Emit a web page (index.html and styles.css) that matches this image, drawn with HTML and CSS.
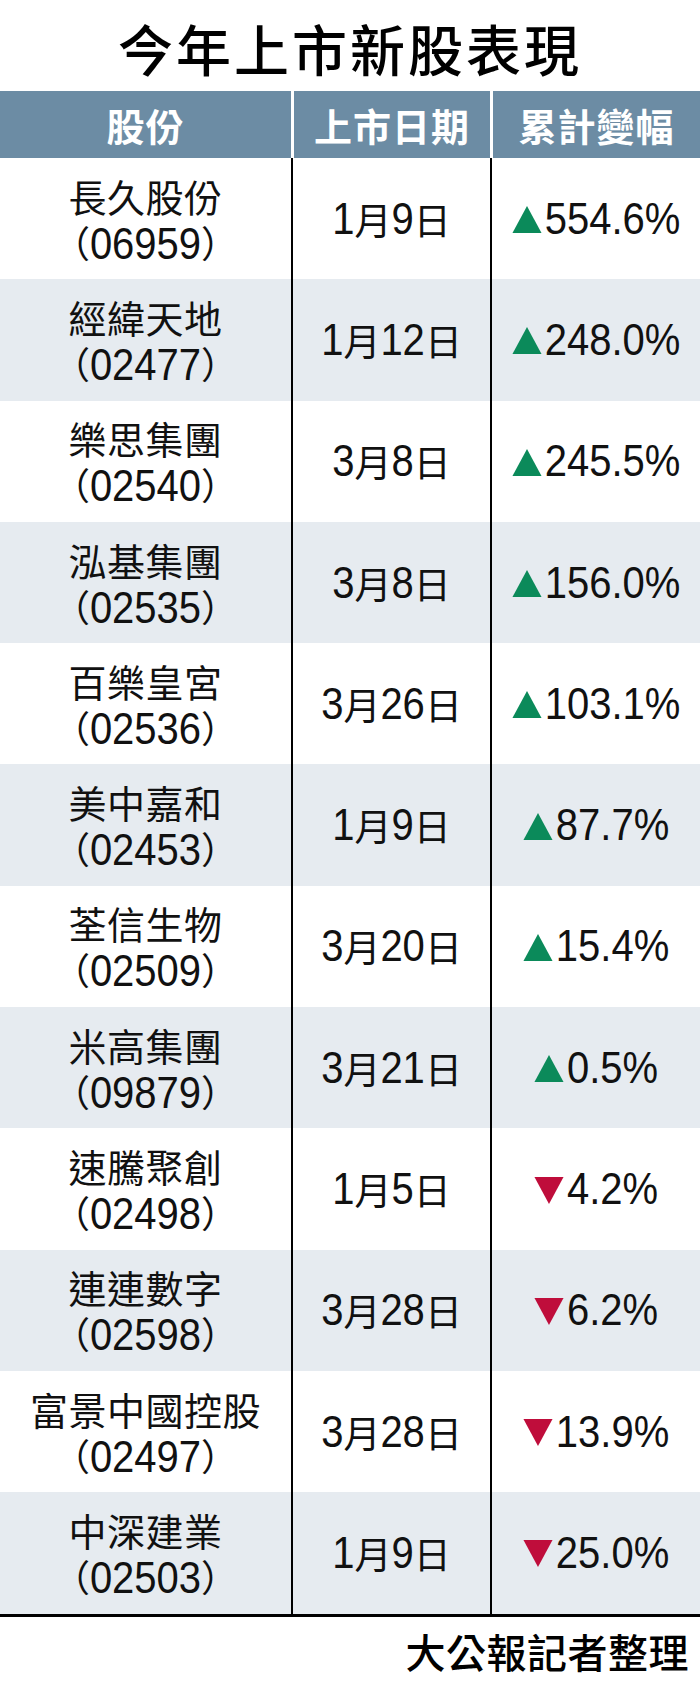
FILE: index.html
```html
<!DOCTYPE html>
<html lang="zh-Hant">
<head>
<meta charset="utf-8">
<title>今年上市新股表現</title>
<link rel="stylesheet" href="styles.css">
</head>
<body>
<div class="page">
  <h1 class="title">今年上市新股表現</h1>
  <div class="table">
    <div class="thead">
      <div class="th">股份</div>
      <div class="th">上市日期</div>
      <div class="th">累計變幅</div>
    </div>
    <div class="row">
      <div class="cell name"><span class="cn">長久股份</span><span class="code">（<span class="num">06959</span>）</span></div>
      <div class="cell date"><span class="num">1</span>月<span class="num">9</span>日</div>
      <div class="cell chg"><svg class="tri up" viewBox="0 0 28 26"><polygon points="14,0 28,26 0,26"/></svg><span class="num">554.6%</span></div>
    </div>
    <div class="row alt">
      <div class="cell name"><span class="cn">經緯天地</span><span class="code">（<span class="num">02477</span>）</span></div>
      <div class="cell date"><span class="num">1</span>月<span class="num">12</span>日</div>
      <div class="cell chg"><svg class="tri up" viewBox="0 0 28 26"><polygon points="14,0 28,26 0,26"/></svg><span class="num">248.0%</span></div>
    </div>
    <div class="row">
      <div class="cell name"><span class="cn">樂思集團</span><span class="code">（<span class="num">02540</span>）</span></div>
      <div class="cell date"><span class="num">3</span>月<span class="num">8</span>日</div>
      <div class="cell chg"><svg class="tri up" viewBox="0 0 28 26"><polygon points="14,0 28,26 0,26"/></svg><span class="num">245.5%</span></div>
    </div>
    <div class="row alt">
      <div class="cell name"><span class="cn">泓基集團</span><span class="code">（<span class="num">02535</span>）</span></div>
      <div class="cell date"><span class="num">3</span>月<span class="num">8</span>日</div>
      <div class="cell chg"><svg class="tri up" viewBox="0 0 28 26"><polygon points="14,0 28,26 0,26"/></svg><span class="num">156.0%</span></div>
    </div>
    <div class="row">
      <div class="cell name"><span class="cn">百樂皇宮</span><span class="code">（<span class="num">02536</span>）</span></div>
      <div class="cell date"><span class="num">3</span>月<span class="num">26</span>日</div>
      <div class="cell chg"><svg class="tri up" viewBox="0 0 28 26"><polygon points="14,0 28,26 0,26"/></svg><span class="num">103.1%</span></div>
    </div>
    <div class="row alt">
      <div class="cell name"><span class="cn">美中嘉和</span><span class="code">（<span class="num">02453</span>）</span></div>
      <div class="cell date"><span class="num">1</span>月<span class="num">9</span>日</div>
      <div class="cell chg"><svg class="tri up" viewBox="0 0 28 26"><polygon points="14,0 28,26 0,26"/></svg><span class="num">87.7%</span></div>
    </div>
    <div class="row">
      <div class="cell name"><span class="cn">荃信生物</span><span class="code">（<span class="num">02509</span>）</span></div>
      <div class="cell date"><span class="num">3</span>月<span class="num">20</span>日</div>
      <div class="cell chg"><svg class="tri up" viewBox="0 0 28 26"><polygon points="14,0 28,26 0,26"/></svg><span class="num">15.4%</span></div>
    </div>
    <div class="row alt">
      <div class="cell name"><span class="cn">米高集團</span><span class="code">（<span class="num">09879</span>）</span></div>
      <div class="cell date"><span class="num">3</span>月<span class="num">21</span>日</div>
      <div class="cell chg"><svg class="tri up" viewBox="0 0 28 26"><polygon points="14,0 28,26 0,26"/></svg><span class="num">0.5%</span></div>
    </div>
    <div class="row">
      <div class="cell name"><span class="cn">速騰聚創</span><span class="code">（<span class="num">02498</span>）</span></div>
      <div class="cell date"><span class="num">1</span>月<span class="num">5</span>日</div>
      <div class="cell chg"><svg class="tri down" viewBox="0 0 28 26"><polygon points="0,0 28,0 14,26"/></svg><span class="num">4.2%</span></div>
    </div>
    <div class="row alt">
      <div class="cell name"><span class="cn">連連數字</span><span class="code">（<span class="num">02598</span>）</span></div>
      <div class="cell date"><span class="num">3</span>月<span class="num">28</span>日</div>
      <div class="cell chg"><svg class="tri down" viewBox="0 0 28 26"><polygon points="0,0 28,0 14,26"/></svg><span class="num">6.2%</span></div>
    </div>
    <div class="row">
      <div class="cell name"><span class="cn">富景中國控股</span><span class="code">（<span class="num">02497</span>）</span></div>
      <div class="cell date"><span class="num">3</span>月<span class="num">28</span>日</div>
      <div class="cell chg"><svg class="tri down" viewBox="0 0 28 26"><polygon points="0,0 28,0 14,26"/></svg><span class="num">13.9%</span></div>
    </div>
    <div class="row alt">
      <div class="cell name"><span class="cn">中深建業</span><span class="code">（<span class="num">02503</span>）</span></div>
      <div class="cell date"><span class="num">1</span>月<span class="num">9</span>日</div>
      <div class="cell chg"><svg class="tri down" viewBox="0 0 28 26"><polygon points="0,0 28,0 14,26"/></svg><span class="num">25.0%</span></div>
    </div>
  </div>
  <div class="source">大公報記者整理</div>
</div>
</body>
</html>
```
FILE: styles.css
```css
html, body {
  margin: 0;
  padding: 0;
  background: #ffffff;
}

body {
  width: 700px;
  font-family: "Noto Sans CJK TC", sans-serif;
  color: #111111;
}

.page {
  display: flex;
  flex-direction: column;
}

.title {
  margin: 0;
  height: 91px;
  display: flex;
  align-items: center;
  justify-content: center;
  font-family: "Noto Sans CJK TC", sans-serif;
  font-weight: 500;
  font-size: 55px;
  letter-spacing: 3px;
  color: #000000;
  padding-top: 2px;
  box-sizing: border-box;
}

.table {
  display: flex;
  flex-direction: column;
  border-bottom: 3px solid #000000;
}

.thead {
  display: grid;
  grid-template-columns: 291px 199px 1fr;
  height: 67px;
}

.th {
  background: #6c8ca4;
  color: #ffffff;
  font-family: "Noto Sans CJK TC", sans-serif;
  font-weight: 700;
  font-size: 38px;
  display: flex;
  align-items: center;
  justify-content: center;
  letter-spacing: 1px;
}

.th + .th {
  border-left: 3px solid #ffffff;
}

.row {
  display: grid;
  grid-template-columns: 291px 199px 1fr;
  height: 121.3px;
  background: #ffffff;
}

.row.alt {
  background: #e6ebf0;
}

.cell {
  display: flex;
  align-items: center;
  justify-content: center;
  font-size: 37px;
  white-space: nowrap;
}

.cell + .cell {
  border-left: 2px solid #000000;
}

.name {
  flex-direction: column;
}

.cn {
  display: block;
  height: 47px;
  line-height: 47px;
  font-size: 38px;
  letter-spacing: 0.5px;
}

.code {
  display: block;
  height: 47px;
  line-height: 47px;
}

.num {
  display: inline-block;
  font-family: "Liberation Sans", sans-serif;
  font-size: 40px;
  line-height: 1;
  transform: scaleY(1.1);
}

.chg {
  gap: 3px;
}

.tri {
  width: 30px;
  height: 27px;
  flex: none;
  margin-top: 2px;
}

.tri.up {
  fill: #0b8a5a;
}

.tri.down {
  fill: #bf0d3b;
}

.source {
  height: 69px;
  display: flex;
  align-items: center;
  justify-content: flex-end;
  padding-right: 11px;
  font-family: "Noto Sans CJK TC", sans-serif;
  font-weight: 500;
  font-size: 40px;
  letter-spacing: 0.5px;
  color: #000000;
}
```
